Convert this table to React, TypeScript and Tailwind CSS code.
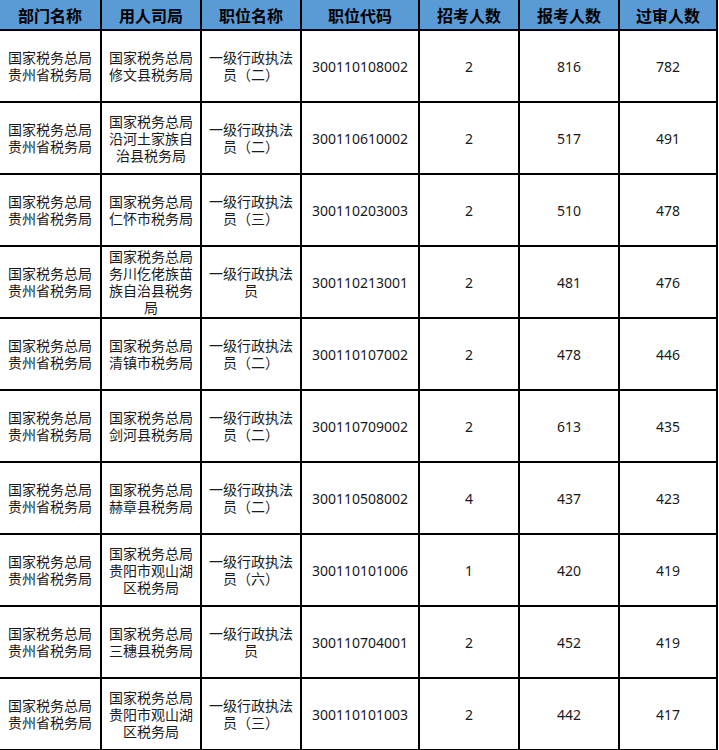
import React from 'react';

const HEADERS = ['部门名称', '用人司局', '职位名称', '职位代码', '招考人数', '报考人数', '过审人数'];

const DEPT = '国家税务总局贵州省税务局';

const ROWS: string[][] = [
  [DEPT, '国家税务总局修文县税务局', '一级行政执法员（二）', '300110108002', '2', '816', '782'],
  [DEPT, '国家税务总局沿河土家族自治县税务局', '一级行政执法员（二）', '300110610002', '2', '517', '491'],
  [DEPT, '国家税务总局仁怀市税务局', '一级行政执法员（三）', '300110203003', '2', '510', '478'],
  [DEPT, '国家税务总局务川仡佬族苗族自治县税务局', '一级行政执法员', '300110213001', '2', '481', '476'],
  [DEPT, '国家税务总局清镇市税务局', '一级行政执法员（二）', '300110107002', '2', '478', '446'],
  [DEPT, '国家税务总局剑河县税务局', '一级行政执法员（二）', '300110709002', '2', '613', '435'],
  [DEPT, '国家税务总局赫章县税务局', '一级行政执法员（二）', '300110508002', '4', '437', '423'],
  [DEPT, '国家税务总局贵阳市观山湖区税务局', '一级行政执法员（六）', '300110101006', '1', '420', '419'],
  [DEPT, '国家税务总局三穗县税务局', '一级行政执法员', '300110704001', '2', '452', '419'],
  [DEPT, '国家税务总局贵阳市观山湖区税务局', '一级行政执法员（三）', '300110101003', '2', '442', '417'],
];

export default function App() {
  return (
    <div className="w-[719px] h-[750px] overflow-hidden bg-white font-['Noto_Sans','Noto_Sans_CJK_SC',sans-serif]">
      <div className="grid grid-cols-[102px_100px_100px_118px_100px_100px_98px]">
        {HEADERS.map((h) => (
          <div
            key={h}
            className="h-[31px] flex items-center justify-center bg-[#5b9bd5] border-r-2 border-b-2 border-black text-[16px] font-bold text-black font-['Noto_Sans_CJK_SC',sans-serif]"
          >
            {h}
          </div>
        ))}
        {ROWS.map((row, r) =>
          row.map((cell, c) => (
            <div
              key={`${r}-${c}`}
              className="h-[72px] flex items-center justify-center px-[6px] text-center border-r-2 border-b-2 border-black text-[14px] leading-[17px] text-[#1a1a1a] break-all"
            >
              {cell}
            </div>
          ))
        )}
      </div>
    </div>
  );
}
